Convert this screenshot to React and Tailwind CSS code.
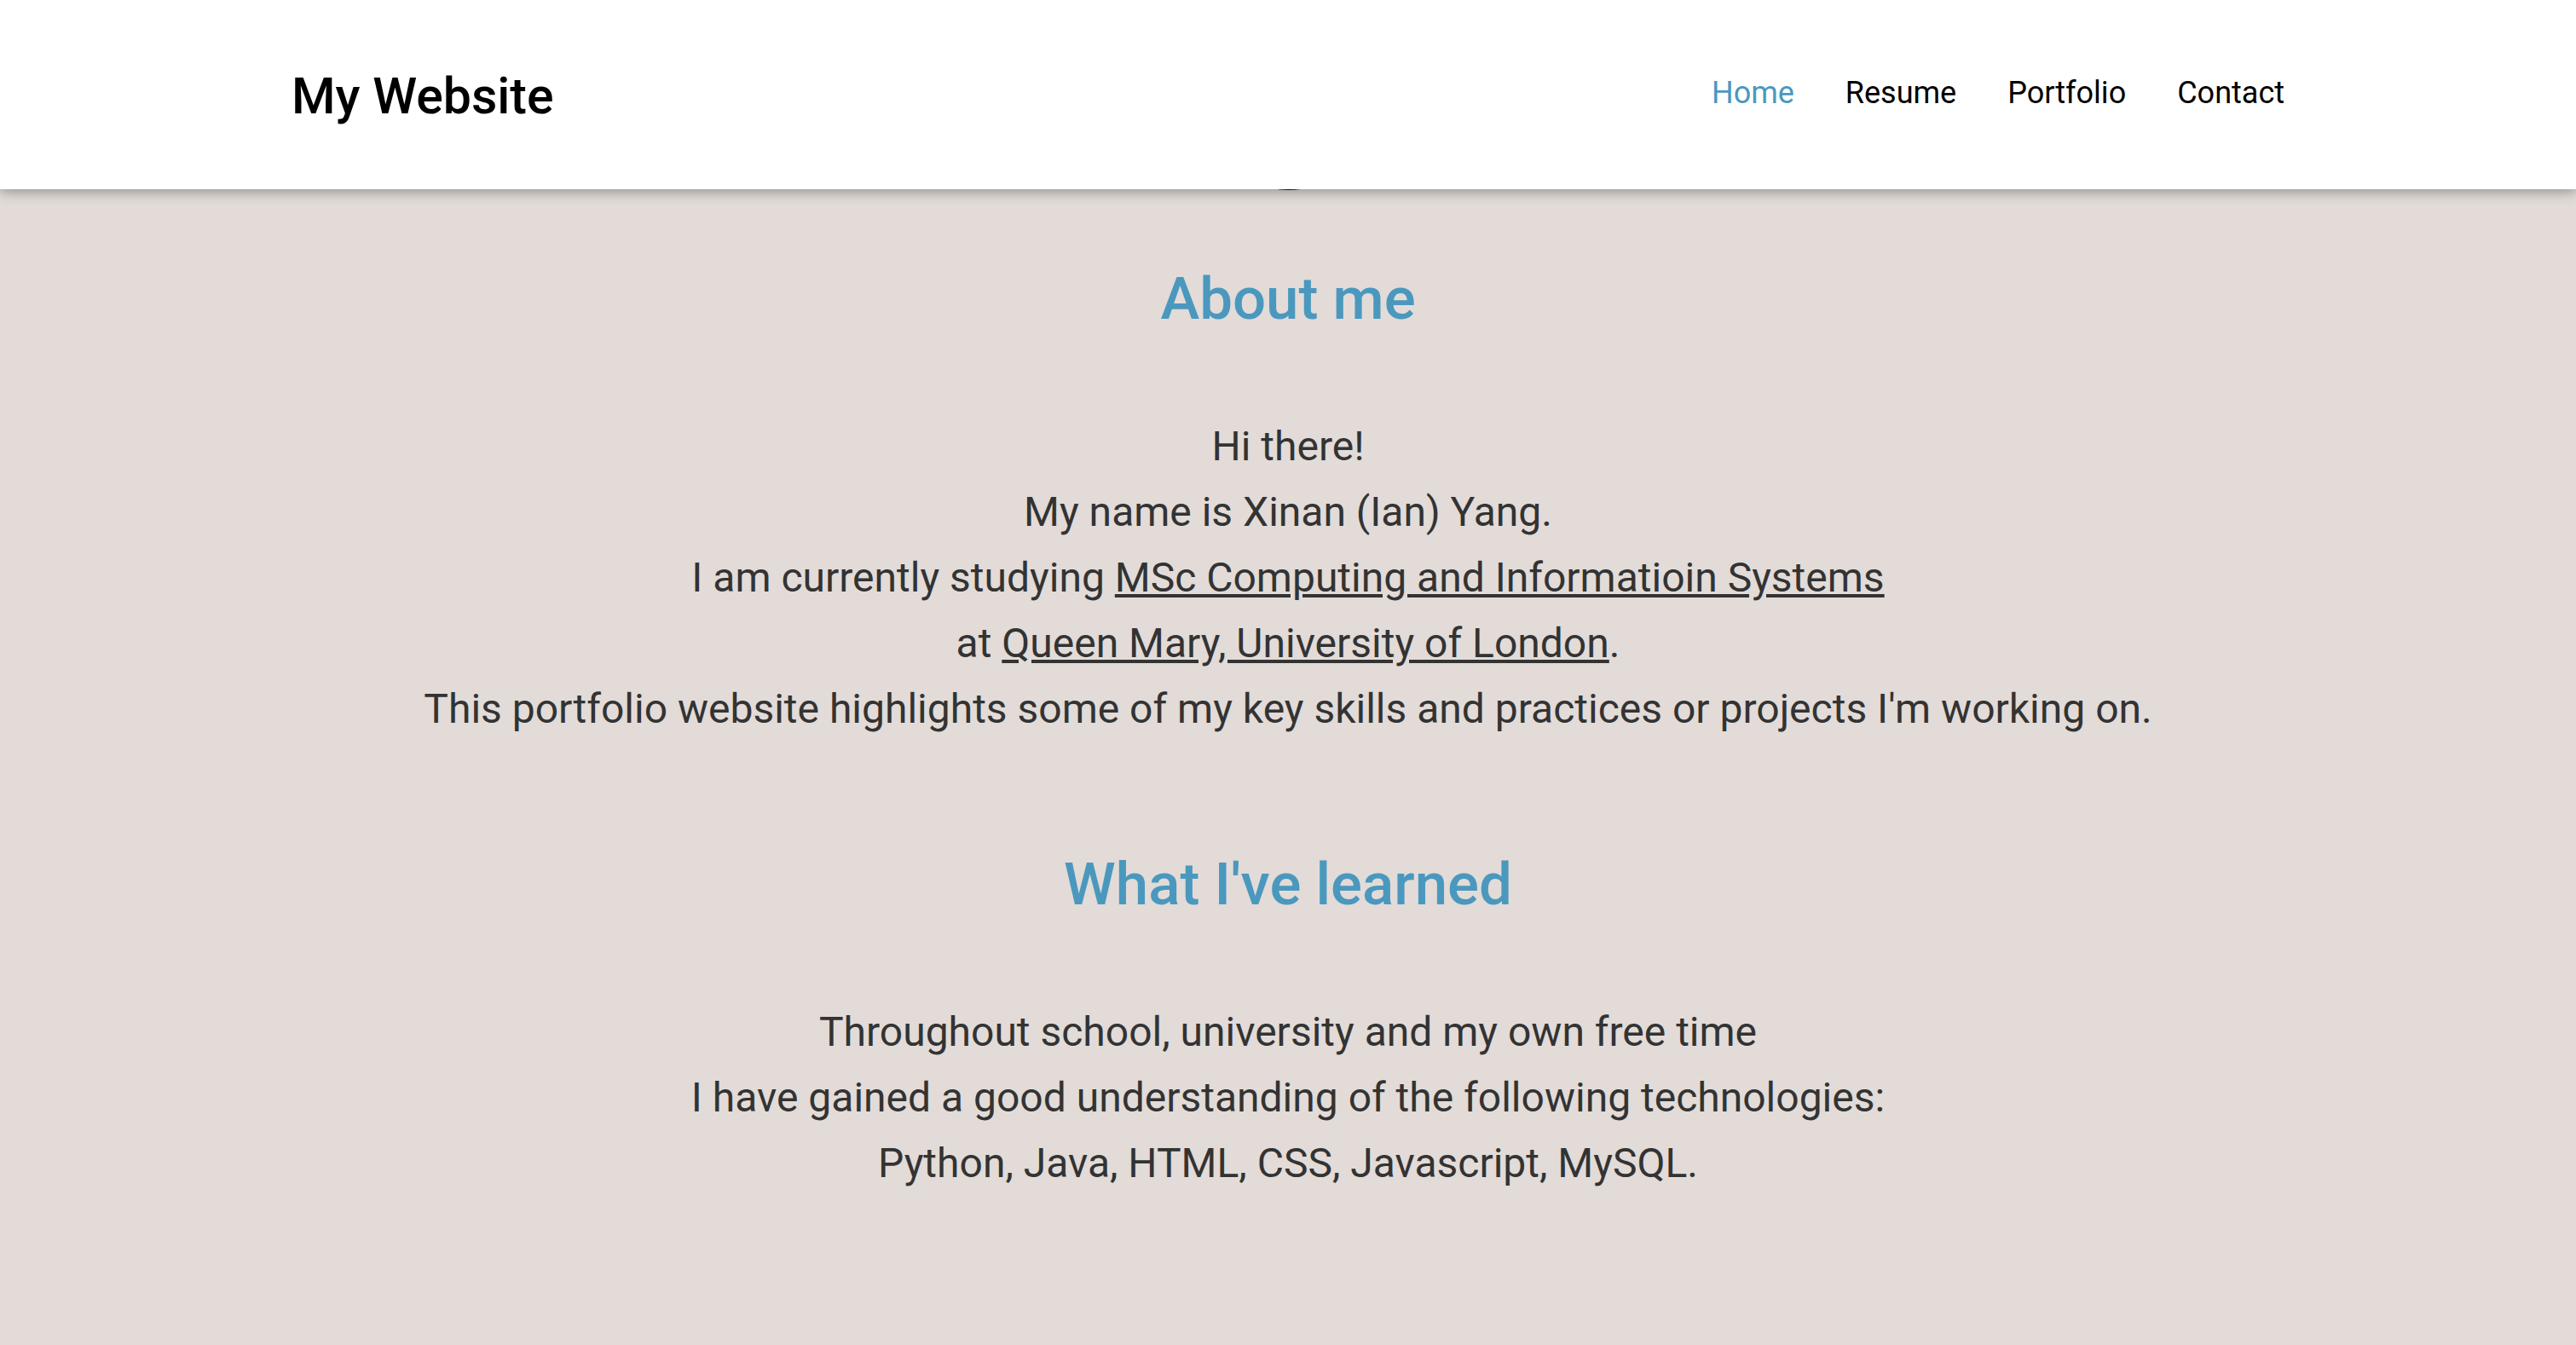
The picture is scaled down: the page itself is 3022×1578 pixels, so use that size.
export default function App() {
  const navLinks = ["Home", "Resume", "Portfolio", "Contact"];

  return (
    <div className="min-h-screen bg-[#e2dbd8] font-['Roboto',sans-serif] text-[#333333]">
      <header className="relative z-10 h-[222px] bg-white shadow-[0_3px_14px_rgba(0,0,0,0.35)]">
        <div className="mx-auto flex h-full w-[2338px] items-center justify-between">
          <a href="#" className="pt-[2px] text-[59px] font-medium leading-none text-black">
            My Website
          </a>
          <nav className="flex items-center gap-[60px] pb-[4px]">
            {navLinks.map((link, i) => (
              <a
                key={link}
                href="#"
                className={i === 0 ? "text-[36px] leading-none text-[#4b98be]" : "text-[36px] leading-none text-black"}
              >
                {link}
              </a>
            ))}
          </nav>
        </div>
      </header>

      <main className="flex flex-col items-center pb-[200px] text-center">
        {/* avatar, scrolled up under the header */}
        <div className="-mt-[200px] h-[201px] w-[201px] rounded-full bg-[#0d1b2e]" />

        <h2 className="mt-[86px] text-[69px] font-medium leading-[84px] text-[#4b98be]">About me</h2>
        <div className="mt-[92px] text-[48px] leading-[77px]">
          <p>Hi there!</p>
          <p>My name is Xinan (Ian) Yang.</p>
          <p>
            I am currently studying{" "}
            <a href="#" className="underline">
              MSc Computing and Informatioin Systems
            </a>
          </p>
          <p>
            at{" "}
            <a href="#" className="underline">
              Queen Mary, University of London
            </a>
            .
          </p>
          <p>This portfolio website highlights some of my key skills and practices or projects I'm working on.</p>
        </div>

        <h2 className="mt-[126px] text-[69px] font-medium leading-[84px] text-[#4b98be]">What I've learned</h2>
        <div className="mt-[92px] text-[48px] leading-[77px]">
          <p>Throughout school, university and my own free time</p>
          <p>I have gained a good understanding of the following technologies:</p>
          <p>Python, Java, HTML, CSS, Javascript, MySQL.</p>
        </div>
      </main>
    </div>
  );
}
